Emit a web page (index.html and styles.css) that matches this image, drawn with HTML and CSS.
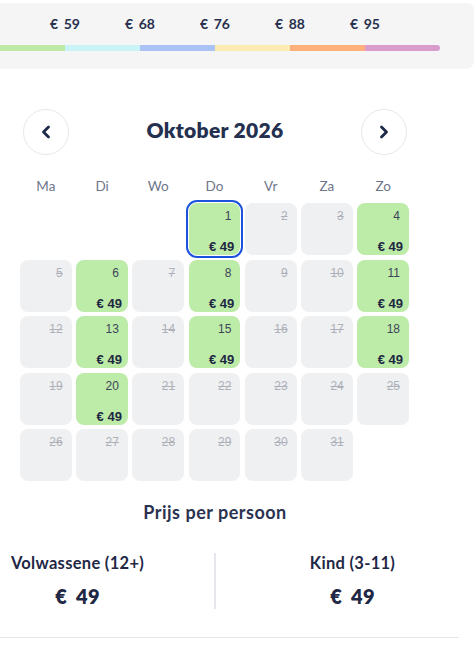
FILE: index.html
```html
<!DOCTYPE html>
<html lang="nl">
<head>
<meta charset="utf-8">
<title>Oktober 2026</title>
<link rel="stylesheet" href="styles.css">
</head>
<body>
<div class="price-panel">
  <div class="legend-labels">
    <span>€ 59</span><span>€ 68</span><span>€ 76</span><span>€ 88</span><span>€ 95</span>
  </div>
  <div class="legend-bar">
    <span class="seg s1"></span><span class="seg s2"></span><span class="seg s3"></span><span class="seg s4"></span><span class="seg s5"></span><span class="seg s6"></span>
  </div>
</div>

<div class="calendar">
  <div class="cal-head">
    <button class="nav" aria-label="Vorige maand">
      <svg width="12" height="14" viewBox="0 0 12 14"><path d="M8.5 2 L3.5 7 L8.5 12" fill="none" stroke="#1f2a48" stroke-width="2.8" stroke-linecap="round" stroke-linejoin="round"/></svg>
    </button>
    <h2 class="month">Oktober 2026</h2>
    <button class="nav" aria-label="Volgende maand">
      <svg width="12" height="14" viewBox="0 0 12 14"><path d="M3.5 2 L8.5 7 L3.5 12" fill="none" stroke="#1f2a48" stroke-width="2.8" stroke-linecap="round" stroke-linejoin="round"/></svg>
    </button>
  </div>
  <div class="weekdays">
    <span>Ma</span><span>Di</span><span>Wo</span><span>Do</span><span>Vr</span><span>Za</span><span>Zo</span>
  </div>
  <div class="days">
    <div class="empty"></div><div class="empty"></div><div class="empty"></div>
    <div class="day avail selected"><span class="num">1</span><span class="price">€ 49</span></div>
    <div class="day"><span class="num">2</span></div>
    <div class="day"><span class="num">3</span></div>
    <div class="day avail"><span class="num">4</span><span class="price">€ 49</span></div>

    <div class="day"><span class="num">5</span></div>
    <div class="day avail"><span class="num">6</span><span class="price">€ 49</span></div>
    <div class="day"><span class="num">7</span></div>
    <div class="day avail"><span class="num">8</span><span class="price">€ 49</span></div>
    <div class="day"><span class="num">9</span></div>
    <div class="day"><span class="num">10</span></div>
    <div class="day avail"><span class="num">11</span><span class="price">€ 49</span></div>

    <div class="day"><span class="num">12</span></div>
    <div class="day avail"><span class="num">13</span><span class="price">€ 49</span></div>
    <div class="day"><span class="num">14</span></div>
    <div class="day avail"><span class="num">15</span><span class="price">€ 49</span></div>
    <div class="day"><span class="num">16</span></div>
    <div class="day"><span class="num">17</span></div>
    <div class="day avail"><span class="num">18</span><span class="price">€ 49</span></div>

    <div class="day"><span class="num">19</span></div>
    <div class="day avail"><span class="num">20</span><span class="price">€ 49</span></div>
    <div class="day"><span class="num">21</span></div>
    <div class="day"><span class="num">22</span></div>
    <div class="day"><span class="num">23</span></div>
    <div class="day"><span class="num">24</span></div>
    <div class="day"><span class="num">25</span></div>

    <div class="day"><span class="num">26</span></div>
    <div class="day"><span class="num">27</span></div>
    <div class="day"><span class="num">28</span></div>
    <div class="day"><span class="num">29</span></div>
    <div class="day"><span class="num">30</span></div>
    <div class="day"><span class="num">31</span></div>
  </div>
</div>

<h3 class="pp-title">Prijs per persoon</h3>
<div class="pp-row">
  <div class="pp-col">
    <div class="pp-label">Volwassene (12+)</div>
    <div class="pp-price">€ 49</div>
  </div>
  <div class="pp-divider"></div>
  <div class="pp-col">
    <div class="pp-label">Kind (3-11)</div>
    <div class="pp-price">€ 49</div>
  </div>
</div>
<div class="bottom-line"></div>
</body>
</html>
```

FILE: styles.css
```css
* { box-sizing: border-box; }
html, body { margin: 0; padding: 0; background: #ffffff; }
body {
  width: 475px;
  overflow: hidden;
  font-family: Lato, "Noto Sans", sans-serif;
  color: #1f2845;
}

.price-panel {
  margin-top: 3px;
  width: 474px;
  height: 66px;
  background: #f5f5f5;
  border-radius: 0 6px 8px 0;
  padding-top: 12px;
  overflow: hidden;
}
.legend-labels {
  display: flex;
  padding-left: 27.5px;
  height: 17px;
  line-height: 17px;
  font-size: 14px;
  font-weight: 700;
  word-spacing: 2px;
  color: #27304d;
}
.legend-labels span { width: 75px; text-align: center; }
.legend-bar {
  display: flex;
  margin-top: 13px;
  margin-left: -10px;
  width: 450px;
  height: 6px;
  border-radius: 3px;
  overflow: hidden;
}
.seg { flex: 1; }
.s1 { background: #bdeaa5; }
.s2 { background: #c9f3f6; }
.s3 { background: #a9c3f7; }
.s4 { background: #feebb1; }
.s5 { background: #fdb07c; }
.s6 { background: #d89dcb; }

.calendar { width: 429px; padding: 0 20px; }
.cal-head {
  display: flex;
  align-items: center;
  justify-content: space-between;
  margin-top: 40px;
  padding: 0 2px 0 3px;
}
.nav {
  width: 46px;
  height: 46px;
  border-radius: 50%;
  border: 1px solid #e8e8eb;
  background: #fff;
  display: flex;
  align-items: center;
  justify-content: center;
  padding: 0;
}
.month {
  margin: 0 0 4px;
  font-size: 21px;
  font-weight: 800;
  letter-spacing: 0.3px;
  color: #243050;
  line-height: 26px;
}
.weekdays {
  display: grid;
  grid-template-columns: repeat(7, 1fr);
  gap: 4.5px;
  margin-top: 23px;
  font-size: 13.5px;
  line-height: 16px;
  color: #6f768a;
  text-align: center;
}
.days {
  display: grid;
  grid-template-columns: repeat(7, 1fr);
  grid-auto-rows: 52px;
  gap: 4.5px;
  margin-top: 9px;
}
.day {
  border-radius: 8px;
  background: #eff0f2;
  padding: 6px 6px 1px;
  display: flex;
  flex-direction: column;
  align-items: flex-end;
  justify-content: space-between;
  font-family: "Liberation Sans", Arial, sans-serif;
}
.num {
  font-size: 12px;
  line-height: 14px;
  margin-right: 3px;
  color: #aeb1b9;
  text-decoration: line-through;
}
.avail { background: #bdeba8; }
.avail .num { color: #3e4558; text-decoration: none; }
.price {
  font-size: 13px;
  line-height: 15px;
  font-weight: 700;
  color: #1e2742;
}
.selected {
  outline: 2px solid #1d52dc;
  outline-offset: 1px;
}

.pp-title {
  margin: 21px 0 0;
  width: 430px;
  text-align: center;
  font-size: 18px;
  font-weight: 700;
  letter-spacing: 0.5px;
  line-height: 20px;
  color: #2b3350;
}
.pp-row {
  display: flex;
  margin-left: -59px;
  width: 548px;
  margin-top: 31px;
}
.pp-col { flex: 1; text-align: center; }
.pp-divider { width: 2px; height: 56px; background: #e6e7ec; }
.pp-label {
  font-size: 16.5px;
  font-weight: 700;
  letter-spacing: 0.3px;
  line-height: 20px;
  color: #1f2845;
}
.pp-price {
  margin-top: 11px;
  font-size: 20px;
  font-weight: 800;
  word-spacing: 4px;
  letter-spacing: 0.3px;
  line-height: 24px;
  color: #1f2845;
}
.bottom-line {
  margin-top: 28px;
  width: 459px;
  height: 1px;
  background: #e6e6e8;
}
```
